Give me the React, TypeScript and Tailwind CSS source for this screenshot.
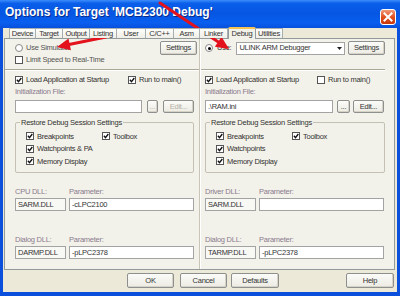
import React from "react";

const T = "text-[7.5px] tracking-[-0.25px] leading-none whitespace-nowrap";

function Check({ checked }: { checked: boolean }) {
  return (
    <span className="w-[8px] h-[8px] border border-[#555] bg-white flex items-center justify-center shrink-0">
      {checked && (
        <svg width="6" height="6" viewBox="0 0 7 7">
          <path d="M1 3.3 L2.9 5.4 L6.2 1.2" stroke="#111" strokeWidth="1.6" fill="none" />
        </svg>
      )}
    </span>
  );
}

function CheckItem({ checked, label, dim }: { checked: boolean; label: string; dim?: boolean }) {
  return (
    <div className="flex items-center gap-[3px]">
      <Check checked={checked} />
      <span className={`${T} ${dim ? "text-[#555]" : "text-[#333]"}`}>{label}</span>
    </div>
  );
}

function Radio({ on }: { on: boolean }) {
  return (
    <span className="w-[8px] h-[8px] rounded-full border border-[#888] bg-white flex items-center justify-center shrink-0">
      {on && <span className="w-[3px] h-[3px] rounded-full bg-black" />}
    </span>
  );
}

function Btn({ label, w, disabled, h = "h-[14px]" }: { label: string; w: string; disabled?: boolean; h?: string }) {
  return (
    <div
      className={`${w} ${h} shrink-0 flex items-center justify-center rounded-[2px] border border-[#8e8f8f] bg-[linear-gradient(#fbfbf8,#ecebe4)] shadow-[inset_-1px_-1px_0_#d6d3c6] ${T} ${
        disabled ? "text-[#b4b1a4]" : "text-[#333]"
      }`}
    >
      {label}
    </div>
  );
}

function Input({ w, value, bg = "bg-white" }: { w: string; value?: string; bg?: string }) {
  return (
    <div className={`${w} h-[13px] shrink-0 border border-[#a3a3a3] ${bg} flex items-center pl-[2px] ${T} text-[#333]`}>
      {value}
    </div>
  );
}

function Label({ children, cls = "" }: { children: React.ReactNode; cls?: string }) {
  return <span className={`${T} text-[#8a7b8e] ${cls}`}>{children}</span>;
}

function Group({ toolX, watch }: { toolX: string; watch: string }) {
  return (
    <div className="relative mt-[9px] h-[51px] border border-[#c4c1b4] rounded-[2px]">
      <span className={`absolute -top-[4px] left-[4px] px-[1px] bg-[#f3f2ea] ${T} text-[#333]`}>
        Restore Debug Session Settings
      </span>
      <div className="pt-[7px] pl-[10px] flex flex-col">
        <div className="h-[12.5px] flex items-center">
          <div className={toolX}>
            <CheckItem checked label="Breakpoints" />
          </div>
          <CheckItem checked label="Toolbox" />
        </div>
        <div className="h-[12.5px] flex items-center">
          <CheckItem checked label={watch} />
        </div>
        <div className="h-[12.5px] flex items-center">
          <CheckItem checked label="Memory Display" />
        </div>
      </div>
    </div>
  );
}

function Arrow({ x1, y1, x2, y2 }: { x1: number; y1: number; x2: number; y2: number }) {
  const dx = x2 - x1;
  const dy = y2 - y1;
  const len = Math.hypot(dx, dy);
  const ux = dx / len;
  const uy = dy / len;
  const hl = 13;
  const hw = 6;
  const bx = x2 - ux * hl;
  const by = y2 - uy * hl;
  const nx = -uy * hw;
  const ny = ux * hw;
  return (
    <g>
      <line x1={x1} y1={y1} x2={bx + ux * 2} y2={by + uy * 2} stroke="#e3121c" strokeWidth="3" strokeLinecap="round" />
      <polygon points={`${x2},${y2} ${bx + nx},${by + ny} ${bx - nx},${by - ny}`} fill="#e3121c" />
    </g>
  );
}

const tabs: [string, number][] = [
  ["Device", 27],
  ["Target", 27],
  ["Output", 27],
  ["Listing", 27],
  ["User", 29],
  ["C/C++", 28],
  ["Asm", 26],
  ["Linker", 28],
  ["Debug", 28],
  ["Utilities", 27],
];

export default function App() {
  return (
    <div className="relative w-[400px] h-[296px] overflow-hidden bg-[#0a50dc] flex flex-col font-['Liberation_Sans',Arial,sans-serif]">
      {/* title bar */}
      <div className="h-[28px] shrink-0 flex items-start bg-[linear-gradient(#3c8dfb_0%,#0a5ee9_12%,#0556e3_50%,#0a5ff0_80%,#0850dd_100%)]">
        <span className="pl-[5px] pt-[5px] text-[12px] leading-[14px] font-bold text-white [text-shadow:1px_1px_0_#0a2a8a] whitespace-nowrap">
          Options for Target 'MCB2300 Debug'
        </span>
        <div className="ml-auto mr-[4px] mt-[9px] w-[16px] h-[16px] rounded-[3px] border border-white bg-[linear-gradient(#f09a7a,#e0501f_50%,#c9380c)] flex items-center justify-center">
          <svg width="10" height="10" viewBox="0 0 10 10">
            <path d="M1.5 1.5 L8.5 8.5 M8.5 1.5 L1.5 8.5" stroke="white" strokeWidth="2" strokeLinecap="square" />
          </svg>
        </div>
      </div>

      {/* body */}
      <div className="flex-1 mx-[3px] mb-[4px] bg-[#ece9d8] flex flex-col">
        {/* tabs */}
        <div className="h-[10px] pl-[6px] flex items-end relative z-10">
          {tabs.map(([t, w]) =>
            t === "Debug" ? (
              <div
                key={t}
                style={{ width: w }}
                className={`h-[12px] -mb-[1px] border-t-2 border-t-[#f5c453] border-x border-[#919b9c] rounded-t-[2px] bg-[#f3f2ea] flex items-center justify-center ${T} text-[#333]`}
              >
                {t}
              </div>
            ) : (
              <div
                key={t}
                style={{ width: w }}
                className={`h-[10px] border-t border-r border-[#a7afb0] bg-[linear-gradient(#fdfdfb,#efeee7)] flex items-center justify-center ${T} text-[#333] first:border-l`}
              >
                {t}
              </div>
            )
          )}
        </div>

        {/* pane */}
        <div className="ml-[1px] mr-[2px] h-[232px] border border-[#919b9c] bg-[#f3f2ea] flex">
          {/* left column */}
          <div className="w-[194px] pl-[10px] flex flex-col">
            <div className="mt-[2px] h-[14px] flex items-center">
              <Radio on={false} />
              <span className={`${T} text-[#555] ml-[3px]`}>Use Simulator</span>
              <div className="ml-auto mr-[2px]">
                <Btn label="Settings" w="w-[37px]" />
              </div>
            </div>
            <div className="h-[10px] flex items-center">
              <CheckItem checked={false} label="Limit Speed to Real-Time" dim />
            </div>
            <div className="-ml-[10px] mt-[4px] h-[2px] border-t border-[#aca899] border-b border-b-white" />
            <div className="mt-[2px] h-[14px] flex items-center">
              <div className="w-[113px]">
                <CheckItem checked label="Load Application at Startup" />
              </div>
              <CheckItem checked label="Run to main()" />
            </div>
            <div className="h-[10px] flex items-center">
              <Label>Initialization File:</Label>
            </div>
            <div className="mt-[3px] flex items-center">
              <Input w="w-[127px]" />
              <div className="ml-[5px]">
                <Btn label="..." w="w-[11px]" h="h-[13px]" disabled />
              </div>
              <div className="ml-[5px]">
                <Btn label="Edit..." w="w-[31px]" h="h-[13px]" disabled />
              </div>
            </div>
            <div className="mr-[5px]">
              <Group toolX="w-[76px]" watch="Watchpoints & PA" />
            </div>
            <div className="mt-[14px] h-[10px] flex items-center">
              <Label cls="w-[54px]">CPU DLL:</Label>
              <Label>Parameter:</Label>
            </div>
            <div className="mt-[1px] flex gap-[3px]">
              <Input w="w-[51px]" value="SARM.DLL" bg="bg-[#f8f8f5]" />
              <Input w="w-[125px]" value="-cLPC2100" />
            </div>
            <div className="mt-[24px] h-[10px] flex items-center">
              <Label cls="w-[54px]">Dialog DLL:</Label>
              <Label>Parameter:</Label>
            </div>
            <div className="mt-[1px] flex gap-[3px]">
              <Input w="w-[51px]" value="DARMP.DLL" bg="bg-[#f8f8f5]" />
              <Input w="w-[125px]" value="-pLPC2378" />
            </div>
          </div>

          {/* divider */}
          <div className="w-[2px] border-l border-[#c8c5b8] border-r border-r-white" />

          {/* right column */}
          <div className="flex-1 pl-[4px] pr-[9px] flex flex-col">
            <div className="mt-[2px] h-[14px] flex items-center">
              <Radio on />
              <span className={`${T} text-[#333] ml-[4px]`}>Use:</span>
              <div className="ml-[5px] w-[109px] h-[13px] border border-[#a3a3a3] bg-white flex items-center">
                <span className={`${T} text-[#333] pl-[2px] flex-1`}>ULINK ARM Debugger</span>
                <span className="w-[9px] h-[11px] flex items-center justify-center">
                  <svg width="5" height="3" viewBox="0 0 5 3">
                    <path d="M0 0 H5 L2.5 3 Z" fill="#222" />
                  </svg>
                </span>
              </div>
              <div className="ml-auto">
                <Btn label="Settings" w="w-[37px]" />
              </div>
            </div>
            <div className="h-[10px]" />
            <div className="-ml-[4px] mt-[4px] h-[2px] border-t border-[#aca899] border-b border-b-white" />
            <div className="mt-[2px] h-[14px] flex items-center">
              <div className="w-[112px]">
                <CheckItem checked label="Load Application at Startup" />
              </div>
              <CheckItem checked={false} label="Run to main()" />
            </div>
            <div className="h-[10px] flex items-center">
              <Label>Initialization File:</Label>
            </div>
            <div className="mt-[3px] flex items-center">
              <Input w="w-[128px]" value=".\RAM.ini" />
              <div className="ml-[4px]">
                <Btn label="..." w="w-[13px]" h="h-[13px]" />
              </div>
              <div className="ml-[3px]">
                <Btn label="Edit..." w="w-[31px]" h="h-[13px]" />
              </div>
            </div>
            <Group toolX="w-[76px]" watch="Watchpoints" />
            <div className="mt-[14px] h-[10px] flex items-center">
              <Label cls="w-[54px]">Driver DLL:</Label>
              <Label>Parameter:</Label>
            </div>
            <div className="mt-[1px] flex gap-[3px]">
              <Input w="w-[51px]" value="SARM.DLL" bg="bg-[#f8f8f5]" />
              <Input w="w-[125px]" />
            </div>
            <div className="mt-[24px] h-[10px] flex items-center">
              <Label cls="w-[54px]">Dialog DLL:</Label>
              <Label>Parameter:</Label>
            </div>
            <div className="mt-[1px] flex gap-[3px]">
              <Input w="w-[51px]" value="TARMP.DLL" bg="bg-[#f8f8f5]" />
              <Input w="w-[125px]" value="-pLPC2378" />
            </div>
          </div>
        </div>

        {/* buttons */}
        <div className="mt-[3px] flex items-start">
          <div className="ml-[124px]">
            <Btn label="OK" w="w-[47px]" h="h-[15px]" />
          </div>
          <div className="ml-[6px]">
            <Btn label="Cancel" w="w-[47px]" h="h-[15px]" />
          </div>
          <div className="ml-[4px]">
            <Btn label="Defaults" w="w-[48px]" h="h-[15px]" />
          </div>
          <div className="ml-auto mr-[3px]">
            <Btn label="Help" w="w-[48px]" h="h-[15px]" />
          </div>
        </div>
      </div>

      {/* red annotation arrows */}
      <svg className="absolute inset-0 pointer-events-none" width="400" height="296">
        <Arrow x1={106} y1={37} x2={57} y2={47} />
        <Arrow x1={160} y1={3} x2={229} y2={49} />
      </svg>
    </div>
  );
}
